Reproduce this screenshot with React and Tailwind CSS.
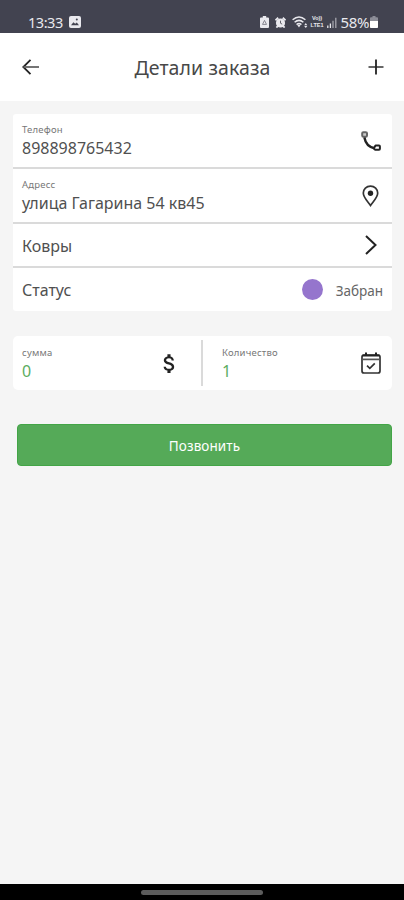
import React from 'react';
import { MdAttachMoney } from 'react-icons/md';

const StatusBar = () => (
  <div className="flex h-[33px] shrink-0 items-end justify-between bg-[#424350] pl-[28px] pr-[26px] pb-[2px] text-[#e9e9ee]">
    <div className="flex items-center gap-[6px]">
      <span className="text-[14.5px] leading-[18px] tracking-[-0.45px]">13:33</span>
      <svg width="12" height="12" viewBox="0 0 12 12">
        <rect width="12" height="12" rx="2" fill="currentColor" />
        <path d="M2 9.2l2.4-3 1.8 1.6 1.6-1.2L10 9.2z" fill="#424350" />
        <circle cx="7.8" cy="3.6" r="1" fill="#424350" />
      </svg>
    </div>
    <div className="flex items-center">
      {/* Battery saver */}
      <svg width="9" height="12" viewBox="0 0 9 12">
        <path d="M2.8 0h3.4v1.4H8q1 0 1 1V11q0 1-1 1H1q-1 0-1-1V2.4q0-1 1-1h1.8z" fill="currentColor" />
        <path d="M4.5 4.4L6.5 8.4H2.5z" fill="none" stroke="#7a7b86" strokeWidth="0.9" />
      </svg>
      {/* Alarm */}
      <svg width="11" height="11" viewBox="0 0 12 12" className="ml-[6px]">
        <circle cx="6" cy="6.5" r="5" fill="currentColor" />
        <path d="M.5 3.500L3.500 .8M11.500 3.500L8.500 .8M1.500 11.500l2-2M10.500 11.500l-2-2" stroke="currentColor" strokeWidth="2" />
        <path d="M6 4v2.800l1.800 1" fill="none" stroke="#55565f" strokeWidth="1" />
      </svg>
      {/* Wi-Fi */}
      <svg width="17" height="12" viewBox="0 0 17 12" className="ml-[6px]">
        <g fill="none" stroke="currentColor" strokeWidth="1.5">
          <path d="M.6 3.8Q7 -1.8 13.4 3.8" />
          <path d="M2.6 6.3Q7 2.5 11.4 6.3" />
          <path d="M4.6 8.6Q7 6.3 9.4 8.6" />
        </g>
        <path d="M5.3 9L7 11.5 8.5 9Q7 8 5.3 9zM12.2 9.3l1.6-2.3 1.5 2.3zM12.2 10h3.1l-1.5 2z" fill="currentColor" />
      </svg>
      <div className="ml-px flex w-[15px] flex-col items-center font-['Liberation_Sans',sans-serif] text-[5.5px] font-bold leading-[7px]">
        <span>Vo))</span>
        <span>LTE1</span>
      </div>
      <svg width="10" height="11" viewBox="0 0 10 11" className="ml-[2px]">
        <path d="M.8 11V8.5M3.4 11V6.5" stroke="currentColor" strokeWidth="1.3" />
        <path d="M6 11V3.8M8.8 11V.8" stroke="currentColor" strokeWidth="1.3" opacity="0.6" />
      </svg>
      <span className="ml-[4px] text-[15px] leading-[18px] tracking-[-0.4px]">58%</span>
      <svg width="8" height="12" viewBox="0 0 8 12" className="ml-[1px]">
        <path d="M2.5 0h3v1.3H7q1 0 1 1V11q0 1-1 1H1q-1 0-1-1V2.3q0-1 1-1h1.5z" fill="#8c8d97" />
        <path d="M0 5h8v6q0 1-1 1H1q-1 0-1-1z" fill="#fff" />
      </svg>
    </div>
  </div>
);

const Header = () => (
  <header className="flex h-[68px] shrink-0 items-center justify-between bg-white pl-[22px] pr-[20px] text-[#222]">
    <svg width="17" height="16" viewBox="0 0 17 16" fill="none" stroke="currentColor" strokeWidth="1.8">
      <path d="M8.5 .8L1.3 8l7.2 7.2" />
      <path d="M1.5 8H17" stroke="#666" />
    </svg>
    <h1 className="pt-[2px] pr-[2px] text-[19.5px] leading-6 tracking-[0.1px] text-[#484848]">Детали заказа</h1>
    <svg width="16" height="16" viewBox="0 0 16 16" fill="none" stroke="currentColor" strokeWidth="1.8">
      <path d="M.5 8h15" stroke="#555" />
      <path d="M8 .5v15" />
    </svg>
  </header>
);

const PhoneIcon = () => (
  <svg width="20" height="20" viewBox="0 0 20 20" fill="none" stroke="#222" strokeWidth="2" strokeLinejoin="round" className="mr-[2px]">
    <path d="M1.200 2.300Q1.200 1.200 2.300 1.200H4.700Q6 1.200 6 2.300V4.500Q6 5.800 4.700 5.800H2.500Q1.200 5.800 1.200 4.500z" stroke="#666" fill="#ccc" />
    <path d="M3.400 6.500Q5 15.500 13.400 17.200" strokeWidth="2.400" />
    <path d="M12.800 17.300L14.500 14.600H18Q18.900 14.600 18.900 15.500V17.800Q18.900 18.700 18 18.700H14z" />
  </svg>
);

const PinIcon = () => (
  <svg width="17" height="22" viewBox="0 0 17 22" className="mr-[4px]">
    <path d="M8.5 1.1C4.4 1.1 1.3 4.200 1.3 8.1c0 4.6 4.7 8.7 7.2 12.3 2.5-3.6 7.2-7.7 7.2-12.3 0-3.9-3.1-7-7.2-7z" fill="none" stroke="#333" strokeWidth="1.7" />
    <circle cx="8.5" cy="8.3" r="2.7" fill="#222" />
  </svg>
);

const CalendarIcon = () => (
  <svg width="20" height="22" viewBox="0 0 20 22" fill="none" stroke="#333" strokeWidth="1.7" className="mr-[2px]">
    <rect x="1" y="3" width="18" height="18" rx="2" />
    <path d="M1.5 3.6h17M5 .5v3M15 .5v3" stroke="#222" strokeWidth="2" />
    <path d="M1 7.4h18" stroke="#555" />
    <path d="M6 13.6l2.8 2.7 5-5" />
  </svg>
);

const Label = ({ children }) => (
  <p className="text-[9.5px] leading-[12px] tracking-[0.2px] text-[#777]">{children}</p>
);

const Field = ({ label, value, children }) => (
  <div className="flex h-[55px] items-center justify-between border-b-2 border-[#dadada] pl-[9px] pr-[9px]">
    <div className="pt-[2px]">
      <Label>{label}</Label>
      <p className="mt-px text-[16px] leading-[22px] text-[#505050]">{value}</p>
    </div>
    {children}
  </div>
);

const App = () => {
  return (
    <div className="flex h-[900px] w-[404px] flex-col overflow-hidden bg-[#f5f5f5] font-['Noto_Sans','Open_Sans',sans-serif]">
      <StatusBar />
      <Header />

      <main className="flex-1 pl-[13px] pr-[12px] pt-[13px]">
        <section className="h-[197px] rounded-[3px] bg-white">
          <Field label="Телефон" value="898898765432">
            <PhoneIcon />
          </Field>
          <Field label="Адресс" value="улица Гагарина 54 кв45">
            <PinIcon />
          </Field>
          <div className="flex h-[44px] items-center justify-between border-b-2 border-[#dadada] pl-[9px] pr-[15px]">
            <span className="pt-px text-[16px] leading-[22px] text-[#505050]">Ковры</span>
            <svg width="12" height="20" viewBox="0 0 12 20" fill="none" stroke="#222" strokeWidth="2">
              <path d="M1 1l9.5 9L1 19" />
            </svg>
          </div>
          <div className="flex h-[43px] items-center pl-[9px] pr-[9px]">
            <span className="flex-1 pt-px text-[16px] leading-[22px] text-[#505050]">Статус</span>
            <span className="size-[21px] rounded-full bg-[#9575cd]" />
            <span className="ml-[13px] pt-[2px] text-[13.5px] leading-[20px] text-[#666]">Забран</span>
          </div>
        </section>

        <section className="mt-[25px] flex h-[54px] items-center rounded-[5px] bg-white">
          <div className="flex w-[188px] items-center justify-between pl-[9px] pr-[19px]">
            <div className="pt-[2px]">
              <Label>сумма</Label>
              <p className="mt-px text-[16px] leading-[22px] text-[#5cad5f]">0</p>
            </div>
            <MdAttachMoney size={25} className="text-[#222]" />
          </div>
          <div className="h-[46px] w-[2px] bg-[#dadada]" />
          <div className="flex flex-1 items-center justify-between pl-[19px] pr-[9px]">
            <div className="pt-[2px]">
              <Label>Количество</Label>
              <p className="mt-px text-[16px] leading-[22px] text-[#5cad5f]">1</p>
            </div>
            <CalendarIcon />
          </div>
        </section>

        <button className="ml-[4px] mt-[34px] flex h-[42px] w-[375px] items-center justify-center rounded-[4px] border border-[#43a547] bg-[#55aa58] pt-[2px] text-[13.5px] leading-[20px] tracking-[0.1px] text-white">
          Позвонить
        </button>
      </main>

      <footer className="flex h-[16px] shrink-0 items-center justify-center bg-black">
        <div className="h-[5px] w-[122px] rounded-full bg-[#5c5c5c]" />
      </footer>
    </div>
  );
};

export default App;
